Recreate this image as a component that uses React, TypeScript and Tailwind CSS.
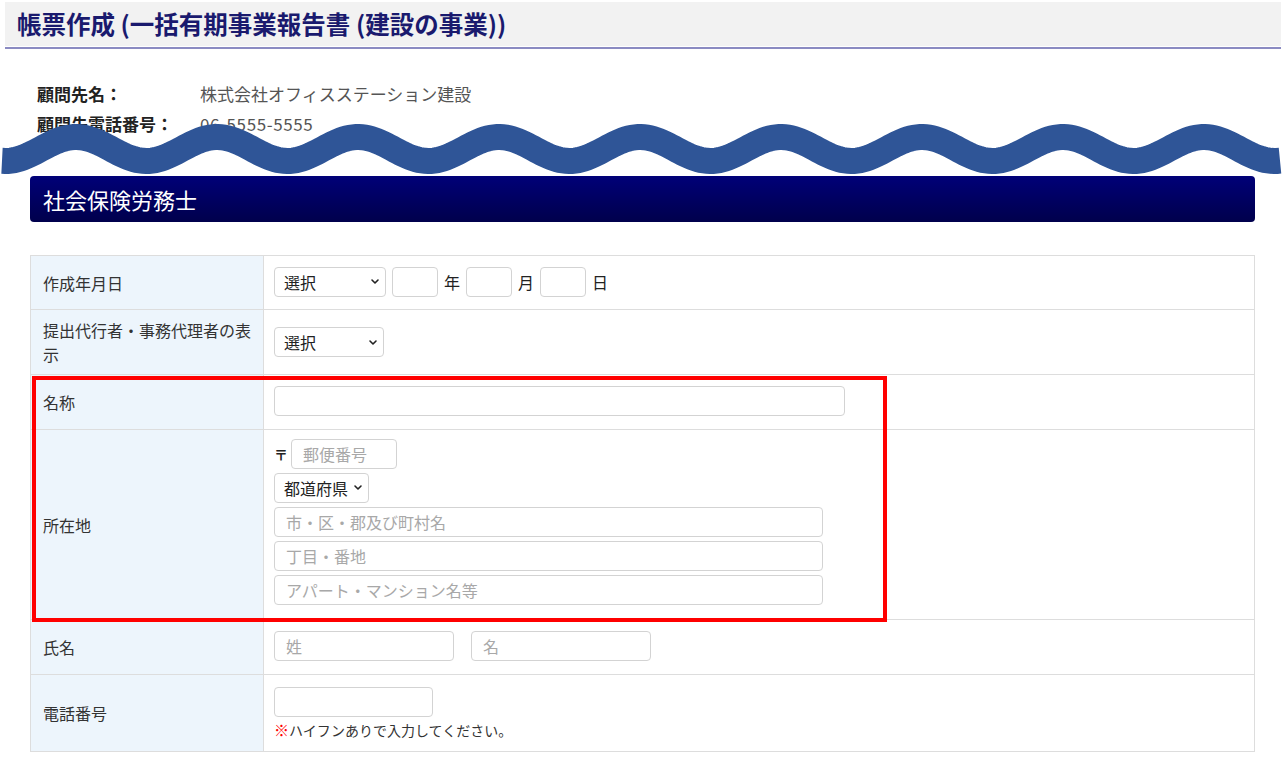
import React from 'react';

const FONT = '"Noto Sans CJK JP", "Noto Sans", sans-serif';

// 切り取り線（波線）の座標
const wavePath = () => {
  const pts: string[] = [];
  for (let x = 2; x <= 1281; x += 3) {
    const y = 147 - 12 * Math.cos((2 * Math.PI * (x - 76)) / 141);
    pts.push(`${x},${y.toFixed(2)}`);
  }
  return 'M' + pts.join(' L');
};

const Chevron = () => (
  <svg width="10" height="7" viewBox="0 0 10 7" className="shrink-0">
    <polyline points="2,2 5,5 8,2" fill="none" stroke="#222" strokeWidth="1.6" strokeLinecap="round" strokeLinejoin="round" />
  </svg>
);

const Select = ({label, className}: {label: string; className: string}) => (
  <div
    className={`h-[30px] border border-[#d3d3d3] rounded-[4px] bg-white flex items-center justify-between pl-[9px] pr-[5px] text-[16px] text-[#222] ${className}`}
  >
    <span>{label}</span>
    <Chevron />
  </div>
);

const Input = ({placeholder, className}: {placeholder?: string; className: string}) => (
  <input
    placeholder={placeholder}
    className={`h-[30px] border border-[#d3d3d3] rounded-[4px] bg-white px-[11px] text-[16px] placeholder:text-[#a8a8a8] outline-none ${className}`}
  />
);

const Row = ({label, h, children, last}: {label: React.ReactNode; h: string; children: React.ReactNode; last?: boolean}) => (
  <div className={`grid grid-cols-[233px_1fr] ${h} ${last ? '' : 'border-b border-[#dddddd]'}`}>
    <div className="bg-[#edf5fc] border-r border-[#dddddd] pl-[12px] pr-[10px] flex items-center text-[16px] leading-[24px] text-[#333]">
      <div>{label}</div>
    </div>
    <div className="pl-[10px] flex items-center">{children}</div>
  </div>
);

export default function App() {
  return (
    <div className="relative w-full min-h-[761px] bg-white" style={{fontFamily: FONT}}>
      <div className="ml-[5px] mr-[2px] mt-[2px] h-[44px] bg-[#f2f2f2] flex items-center pl-[12px]">
        <h1 className="text-[24.5px] font-bold text-[#1a1a6e] leading-none">帳票作成 (一括有期事業報告書 (建設の事業))</h1>
      </div>
      <div className="ml-[5px] mr-[2px] mt-px h-[2px] bg-[#8b8bc2]" />

      <div className="pl-[37px] pt-[30px] text-[17px] leading-[30px]">
        <div className="flex">
          <span className="w-[163px] font-bold text-[#222]">顧問先名：</span>
          <span className="text-[#555]">株式会社オフィスステーション建設</span>
        </div>
        <div className="flex">
          <span className="w-[163px] font-bold text-[#222]">顧問先電話番号：</span>
          <span className="text-[#555] tracking-[0.6px]">06-5555-5555</span>
        </div>
      </div>

      <div className="ml-[30px] mr-[28px] mt-[37px] h-[46px] rounded-[4px] bg-linear-to-b from-[#000078] to-[#00004c] flex items-center pl-[13px]">
        <h2 className="text-white text-[22px]">社会保険労務士</h2>
      </div>

      <div className="relative ml-[30px] mr-[28px] mt-[33px] border border-[#dddddd]">
        <Row label="作成年月日" h="h-[54px]">
          <div className="flex items-center gap-[6px] text-[16px] text-[#222] -mt-[2px]">
            <Select label="選択" className="w-[112px]" />
            <Input className="w-[46px]" />
            <span>年</span>
            <Input className="w-[46px]" />
            <span>月</span>
            <Input className="w-[46px]" />
            <span>日</span>
          </div>
        </Row>
        <Row label="提出代行者・事務代理者の表示" h="h-[65px]">
          <Select label="選択" className="w-[110px]" />
        </Row>
        <Row label="名称" h="h-[55px]">
          <Input className="w-[571px] -mt-[2px]" />
        </Row>
        <Row label="所在地" h="h-[190px]">
          <div className="flex flex-col gap-[4px] pb-[6px]">
            <div className="flex items-center gap-[3px]">
              <span className="text-[14px] font-bold text-[#222] leading-none">〒</span>
              <Input placeholder="郵便番号" className="w-[106px]" />
            </div>
            <Select label="都道府県" className="w-[95px]" />
            <Input placeholder="市・区・郡及び町村名" className="w-[549px]" />
            <Input placeholder="丁目・番地" className="w-[549px]" />
            <Input placeholder="アパート・マンション名等" className="w-[549px]" />
          </div>
        </Row>
        <Row label="氏名" h="h-[55px]">
          <div className="flex gap-[17px] -mt-[2px]">
            <Input placeholder="姓" className="w-[180px]" />
            <Input placeholder="名" className="w-[180px]" />
          </div>
        </Row>
        <Row label="電話番号" h="h-[76px]" last>
          <div className="flex flex-col gap-[3px]">
            <Input className="w-[159px]" />
            <p className="text-[14px] text-[#333] leading-[20px]">
              <span className="text-[#ff0000] font-bold text-[15px]">※</span>ハイフンありで入力してください。
            </p>
          </div>
        </Row>

        <div className="absolute left-px top-[120px] w-[855px] h-[246px] border-[4px] border-[#ff0000] pointer-events-none" />
      </div>

      <svg
        className="absolute left-0 top-0 pointer-events-none"
        width="1283"
        height="190"
        viewBox="0 0 1283 190"
      >
        <path d={wavePath()} fill="none" stroke="#2f5597" strokeWidth="26" strokeLinecap="butt" />
      </svg>
    </div>
  );
}
